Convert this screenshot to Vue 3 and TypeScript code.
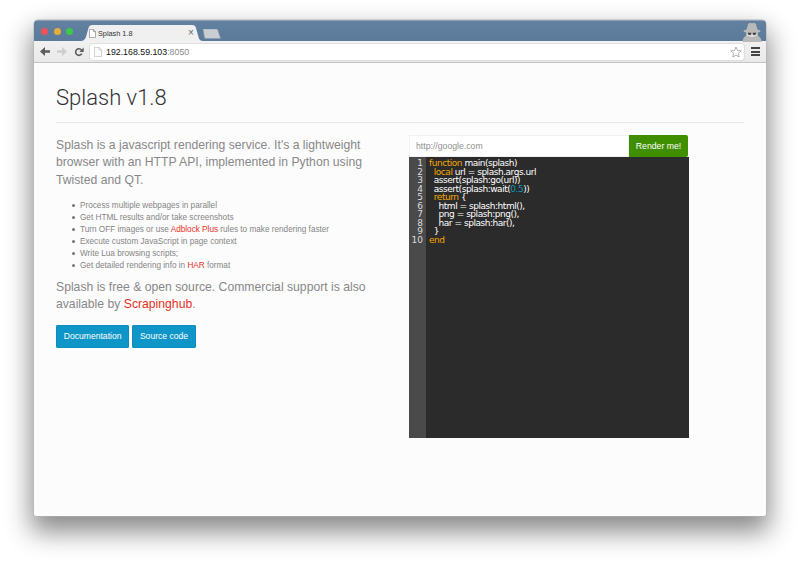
<script setup lang="ts">
const features = [
  { before: 'Process multiple webpages in parallel' },
  { before: 'Get HTML results and/or take screenshots' },
  { before: 'Turn OFF images or use ', link: 'Adblock Plus', after: ' rules to make rendering faster' },
  { before: 'Execute custom JavaScript in page context' },
  { before: 'Write Lua browsing scripts;' },
  { before: 'Get detailed rendering info in ', link: 'HAR', after: ' format' },
]
type Tok = { t: string; c?: string }
const code: Tok[][] = [
  [{ t: 'function', c: 'kw' }, { t: ' main(splash)' }],
  [{ t: '  ' }, { t: 'local', c: 'kw' }, { t: ' url = splash.args.url' }],
  [{ t: '  assert(splash:go(url))' }],
  [{ t: '  assert(splash:wait(' }, { t: '0.5', c: 'num' }, { t: '))' }],
  [{ t: '  ' }, { t: 'return', c: 'kw' }, { t: ' {' }],
  [{ t: '    html = splash:html(),' }],
  [{ t: '    png = splash:png(),' }],
  [{ t: '    har = splash:har(),' }],
  [{ t: '  }' }],
  [{ t: 'end', c: 'kw' }],
]
</script>

<template>
  <div class="desktop">
    <div class="window">
      <header class="titlebar">
        <div class="lights">
          <i class="light red"></i><i class="light yellow"></i><i class="light green"></i>
        </div>
        <div class="tab">
          <svg class="tab-shape" width="124" height="16" viewBox="0 0 124 16">
            <path d="M0 16C4 16 5.500 14 6.500 10L8.500 3C9 1 10 0 12.500 0H112C114.500 0 115.500 1 116 3L118.500 12C119.300 15 120.500 16 124 16Z" fill="#f0f0f0" />
          </svg>
          <svg class="doc" width="7" height="9" viewBox="0 0 7 9">
            <path d="M.5 .4H4.300L6.500 2.600V8.600H.5ZM4.300 .4V2.600H6.500" fill="#fff" stroke="#777" stroke-width=".6" />
          </svg>
          <span class="tab-title">Splash 1.8</span>
          <span class="tab-x">×</span>
        </div>
        <svg class="newtab" width="19" height="10" viewBox="0 0 19 10">
          <path d="M1 0H14C15 0 15.500 .5 16 1.500L18.500 9.500H4C3 9.500 2.700 9 2.400 8Z" fill="#c9ced4" stroke="#8c99a8" stroke-width=".5" />
        </svg>
        <svg class="spy" width="20" height="20" viewBox="0 0 20 20">
          <path d="M4.500 7.500 6 2.500C6.500 .8 8 .6 10 1.300 12 .6 13.500 .8 14 2.500L15.500 7.500C17.500 8 18.500 8.500 18.500 9.200 18.500 10 15.500 10.500 15.500 10.500V13L17 14.500C18.500 15.500 19.500 17.500 19.500 20H.5C.5 17.500 1.500 15.500 3 14.500L4.500 13V10.500C4.500 10.500 1.500 10 1.500 9.200 1.500 8.500 2.500 8 4.500 7.500Z" fill="#b9b9b9" />
          <path d="M4.500 10.500C8 11.300 12 11.300 15.500 10.500V13C13 15.500 7 15.500 4.500 13Z" fill="#dcdcdc" />
          <path d="M5.500 10.800H9.300V12.300C9 13.200 6.800 13.200 6 12.300ZM10.700 10.800H14.500L14 12.300C13.200 13.200 11 13.200 10.700 12.300Z" fill="#3d3d3d" />
        </svg>
      </header>
      <nav class="toolbar">
        <svg class="nav" width="10" height="9" viewBox="0 0 10 9">
          <path d="M10 3.200H5V0L0 4.500 5 9V5.800H10Z" fill="#5c5c5c" />
        </svg>
        <svg class="nav" width="10" height="9" viewBox="0 0 10 9">
          <path d="M0 3.200H5V0L10 4.500 5 9V5.800H0Z" fill="#cdcdcd" />
        </svg>
        <svg class="nav" width="10" height="10" viewBox="0 0 10 10">
          <path d="M7.800 6.600A3.300 3.300 0 1 1 7.500 3" fill="none" stroke="#5c5c5c" stroke-width="1.600" />
          <path d="M9.700 .6V5H5.300Z" fill="#5c5c5c" />
        </svg>
        <div class="omnibox">
          <svg class="doc" width="8" height="10" viewBox="0 0 8 10">
            <path d="M.5 .4H5L7.500 2.900V9.600H.5ZM5 .4V2.900H7.500" fill="#fbfbfb" stroke="#b5b5b5" stroke-width=".6" />
          </svg>
          <span class="url">192.168.59.103<span class="port">:8050</span></span>
          <svg class="star" width="12" height="12" viewBox="0 0 24 24">
            <path d="M12 2 15 9 22.500 9.700 16.800 14.700 18.500 22 12 18.100 5.500 22 7.200 14.700 1.500 9.700 9 9Z" fill="#fff" stroke="#9a9a9a" stroke-width="1.600" />
          </svg>
        </div>
        <div class="menu"><i></i><i></i><i></i></div>
      </nav>

      <main class="page">
        <h1 class="title">Splash v1.8</h1>
        <div class="columns">
          <section class="left">
            <p class="lead">Splash is a javascript rendering service. It's a lightweight browser with an HTTP API, implemented in Python using Twisted and QT.</p>
            <ul class="features">
              <li v-for="f in features" :key="f.before">{{ f.before }}<a v-if="f.link" class="link">{{ f.link }}</a>{{ f.after }}</li>
            </ul>
            <p class="lead">Splash is free &amp; open source. Commercial support is also available by <a class="link">Scrapinghub</a>.</p>
            <div class="buttons">
              <a class="btn">Documentation</a>
              <a class="btn">Source code</a>
            </div>
          </section>
          <section class="right">
            <form class="render" @submit.prevent>
              <input class="address" placeholder="http://google.com" />
              <button class="go" type="button">Render me!</button>
            </form>
            <div class="editor">
              <div class="gutter">
                <div v-for="(_, i) in code" :key="i" class="ln">{{ i + 1 }}</div>
              </div>
              <pre class="code"><div v-for="(line, i) in code" :key="i" class="cl"><span v-for="(tok, j) in line" :key="j" :class="tok.c">{{ tok.t }}</span></div></pre>
            </div>
          </section>
        </div>
      </main>
    </div>
  </div>
</template>

<style>
html, body { margin: 0; background: #fff; }
</style>

<style scoped>
.desktop {
  width: 800px;
  height: 564px;
  padding: 20px 34px 48px;
  box-sizing: border-box;
  overflow: hidden;
  font-family: "Liberation Sans", Arial, sans-serif;
}
.window {
  height: 100%;
  display: flex;
  flex-direction: column;
  background: #fcfcfc;
  border-radius: 4px 4px 2px 2px;
  overflow: hidden;
  box-shadow: 0 0 0 .5px #b5b5b5, 0 13px 26px 3px rgba(0, 0, 0, .46);
}
.titlebar {
  position: relative;
  flex: 0 0 21px;
  background: linear-gradient(#62809f, #5c7a9b);
  border-top: 1px solid #8ba0b8;
  box-sizing: border-box;
}
.lights { position: absolute; left: 7px; top: 7px; display: flex; gap: 5.500px; }
.light { width: 7px; height: 7px; border-radius: 50%; }
.red { background: #f0525a; }
.yellow { background: #e6ad3a; }
.green { background: #3cc84a; }
.tab {
  position: absolute;
  left: 46px;
  top: 4px;
  width: 124px;
  height: 16px;
  display: flex;
  align-items: center;
  padding: 0 0 0 9px;
  box-sizing: border-box;
}
.tab-shape { position: absolute; left: 0; top: 0; }
.tab .doc { position: relative; margin-right: 2px; }
.tab-title { position: relative; font-size: 7.300px; color: #333; }
.tab-x { position: absolute; left: 108px; top: 2px; font-size: 10px; color: #666; }
.newtab { position: absolute; left: 168px; top: 8px; }
.spy { position: absolute; right: 4px; top: 1px; }
.toolbar {
  flex: 0 0 22px;
  display: flex;
  align-items: center;
  gap: 7px;
  padding: 0 6px;
  box-sizing: border-box;
  background: linear-gradient(#f1f1f1, #e9e9e9);
  border-bottom: 1px solid #c4c4c4;
}
.toolbar > .nav { flex: none; }
.omnibox {
  flex: 1;
  height: 16px;
  display: flex;
  align-items: center;
  gap: 4px;
  padding: 0 2px 0 4px;
  margin-left: -1px;
  background: #fff;
  border-radius: 2px;
  box-shadow: 0 0 0 .5px #cfcfcf;
}
.url { flex: 1; font-size: 8.800px; color: #111; }
.port { color: #8a8a8a; }
.menu { display: flex; flex-direction: column; gap: 1.300px; width: 9px; }
.menu i { height: 2px; background: #444; }
.page { flex: 1; padding: 0 22px; min-height: 0; color: #777; }
.title {
  margin: 0;
  padding: 20px 0 9px;
  font-family: Roboto, sans-serif;
  font-weight: 300;
  font-size: 22px;
  line-height: 30px;
  color: #333;
  border-bottom: 1px solid #e6e6e6;
}
.columns { display: flex; margin-top: 12px; }
.left { width: 353px; padding: 1.500px 33px 0 0; box-sizing: border-box; flex: none; }
.lead { margin: 0; font-size: 12.200px; line-height: 17.600px; color: #888; }
.features {
  margin: 10.500px 0 7px;
  padding-left: 24px;
  list-style: none;
  font-size: 8.200px;
  line-height: 12px;
  color: #858585;
}
.features li { position: relative; }
.features li::before {
  content: "";
  position: absolute;
  left: -8.500px;
  top: 4.500px;
  width: 3px;
  height: 3px;
  border-radius: 50%;
  background: #777;
}
.link { color: #e6301f; }
.buttons { display: flex; gap: 3px; margin-top: 11.500px; }
.btn {
  padding: 0 7.700px;
  height: 23px;
  line-height: 23px;
  font-size: 8.600px;
  color: #fff;
  background: #0e96c8;
  border-radius: 2px;
  box-shadow: inset 0 0 0 .5px #0b84b0;
}
.right { width: 280px; }
.render { display: flex; width: 279px; height: 22px; }
.address {
  flex: 1;
  min-width: 0;
  border: 0;
  outline: 0;
  padding: 0 7px;
  font: 8.700px "Liberation Sans", Arial, sans-serif;
  background: #fff;
  box-shadow: inset 0 0 0 .5px #e4e4e4;
}
.address::placeholder { color: #8f8f8f; opacity: 1; }
.go {
  flex: 0 0 59px;
  border: 0;
  padding: 0;
  font: 8.700px "Liberation Sans", Arial, sans-serif;
  color: #fff;
  background: #3f8f00;
  border-radius: 0 2px 2px 0;
}
.editor {
  display: flex;
  height: 281px;
  width: 280px;
  background: #2b2b2b;
  font-family: "DejaVu Sans", sans-serif;
  font-size: 9px;
  line-height: 8.550px;
}
.gutter {
  flex: 0 0 17px;
  padding: 2px 3px 0 0;
  background: #4a4a4a;
  color: #dcdcdc;
  text-align: right;
  box-sizing: border-box;
}
.code {
  margin: 0 0 0 3px;
  padding-top: 2px;
  font: inherit;
  color: #fff;
  white-space: pre;
  letter-spacing: -.47px;
}
.kw { color: #f5a800; }
.num { color: #0e9ab8; }
</style>
